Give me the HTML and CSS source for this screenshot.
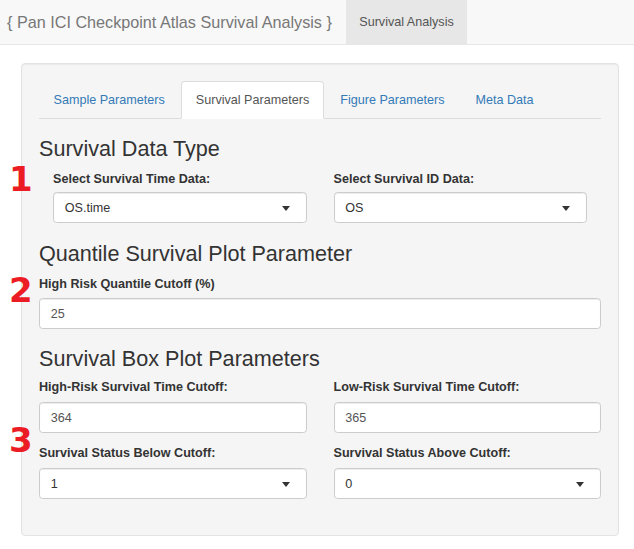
FILE: index.html
```html
<!DOCTYPE html>
<html lang="en">
<head>
<meta charset="utf-8">
<title>Pan ICI Checkpoint Atlas Survival Analysis</title>
<link rel="stylesheet" href="styles.css">
</head>
<body>
<nav class="navbar">
  <span class="brand">{ Pan ICI Checkpoint Atlas Survival Analysis }</span>
  <span class="nav-item active">Survival Analysis</span>
</nav>
<main class="page">
  <div class="well">
    <ul class="tabs">
      <li class="tab">Sample Parameters</li>
      <li class="tab active">Survival Parameters</li>
      <li class="tab">Figure Parameters</li>
      <li class="tab">Meta Data</li>
    </ul>
    <div class="tab-content">
      <h3 class="h-data">Survival Data Type</h3>
      <div class="grid inset">
        <div class="field">
          <label class="label">Select Survival Time Data:</label>
          <div class="control select">OS.time</div>
        </div>
        <div class="field">
          <label class="label">Select Survival ID Data:</label>
          <div class="control select">OS</div>
        </div>
      </div>

      <h3 class="h-quant">Quantile Survival Plot Parameter</h3>
      <div class="field">
        <label class="label">High Risk Quantile Cutoff (%)</label>
        <div class="control input">25</div>
      </div>

      <h3 class="h-box">Survival Box Plot Parameters</h3>
      <div class="grid">
        <div class="field">
          <label class="label">High-Risk Survival Time Cutoff:</label>
          <div class="control input">364</div>
        </div>
        <div class="field">
          <label class="label">Low-Risk Survival Time Cutoff:</label>
          <div class="control input">365</div>
        </div>
        <div class="field second">
          <label class="label">Survival Status Below Cutoff:</label>
          <div class="control select">1</div>
        </div>
        <div class="field second">
          <label class="label">Survival Status Above Cutoff:</label>
          <div class="control select">0</div>
        </div>
      </div>
    </div>
  </div>
</main>
<span class="marker m1">1</span>
<span class="marker m2">2</span>
<span class="marker m3">3</span>
</body>
</html>
```

FILE: styles.css
```css
* { box-sizing: border-box; }

body {
  margin: 0;
  position: relative;
  background: #fff;
  color: #333;
  font-family: "Liberation Sans", Arial, sans-serif;
  font-size: 12.6px;
  line-height: 18px;
}

.navbar {
  display: flex;
  height: 45px;
  background: #f8f8f8;
  border-bottom: 1px solid #e7e7e7;
}

.brand {
  flex: 0 0 346px;
  display: flex;
  align-items: center;
  padding-left: 7px;
  font-size: 16.2px;
  color: #777;
  white-space: nowrap;
}

.nav-item {
  flex: 0 0 121px;
  display: flex;
  align-items: center;
  justify-content: center;
  color: #555;
}

.nav-item.active { background: #e7e7e7; }

.page {
  padding: 18px 15px 0 21px;
}

.well {
  background: #f5f5f5;
  border: 1px solid #e3e3e3;
  border-radius: 4px;
  box-shadow: inset 0 1px 1px rgba(0, 0, 0, .05);
  padding: 17px 17px 36px;
}

.tabs {
  display: flex;
  margin: 0;
  padding: 0;
  list-style: none;
  border-bottom: 1px solid #ddd;
}

.tab {
  margin: 0 2px -1px 0;
  padding: 9px 13.5px;
  line-height: 18px;
  border: 1px solid transparent;
  border-radius: 3.6px 3.6px 0 0;
  color: #337ab7;
}

.tab.active {
  color: #555;
  background: #fff;
  border-color: #ddd;
  border-bottom-color: transparent;
}

h3 {
  margin: 18px 0 9px;
  font-size: 21.6px;
  font-weight: normal;
  line-height: 24px;
  color: #333;
}

.h-quant { margin-top: 19px; }
.h-box { margin-bottom: 7px; }

.grid {
  display: grid;
  grid-template-columns: 1fr 1fr;
  column-gap: 27px;
}

.grid.inset { padding: 0 14px; }

.field.second { margin-top: 11px; }

.label {
  display: block;
  margin-bottom: 4px;
  font-weight: bold;
  line-height: 18px;
}

.h-quant + .field .label { margin-bottom: 5px; }
.h-box + .grid .label { margin-bottom: 6px; }

.control {
  position: relative;
  display: flex;
  align-items: center;
  height: 31px;
  padding: 0 10.8px;
  background: #fff;
  border: 1px solid #ccc;
  border-radius: 3.6px;
  box-shadow: inset 0 1px 1px rgba(0, 0, 0, .075);
}

.input { color: #555; }
.select { color: #333; }

.select::after {
  content: "";
  position: absolute;
  right: 16px;
  top: 50%;
  margin-top: -2px;
  border-style: solid;
  border-width: 5px 4.5px 0 4.5px;
  border-color: #333 transparent transparent transparent;
}

.marker {
  position: absolute;
  left: 9px;
  font-family: "DejaVu Sans", sans-serif;
  font-weight: bold;
  font-size: 34px;
  line-height: 34px;
  color: #ec1c24;
}

.m1 { top: 162px; }
.m2 { top: 273px; }
.m3 { top: 423px; }
```
